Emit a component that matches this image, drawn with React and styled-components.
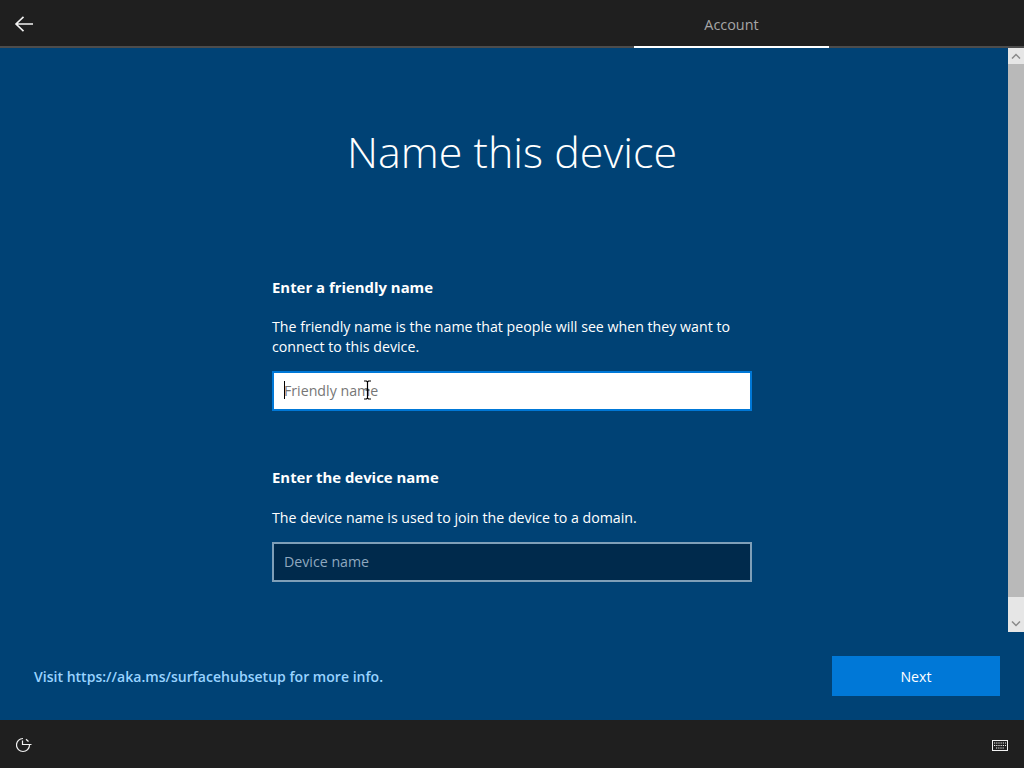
import React from 'react';
import styled, { createGlobalStyle } from 'styled-components';

const GlobalStyle = createGlobalStyle`
	html, body { margin: 0; padding: 0; }
	body { font-family: "Open Sans", "Noto Sans", "Liberation Sans", sans-serif; background: #004275; }
	* { box-sizing: border-box; }
`;

const Page = styled.div`
	width: 1024px;
	height: 768px;
	display: flex;
	flex-direction: column;
	overflow: hidden;
	background: #004275;
	color: #fff;
`;

const TopBar = styled.header`
	height: 48px;
	flex: none;
	display: flex;
	background: #1f1f1f;
	border-bottom: 2px solid #4c4c4c;
`;
const BackButton = styled.button`
	width: 48px;
	height: 46px;
	padding: 2px 0 0;
	border: 0;
	background: none;
	display: flex;
	align-items: center;
	justify-content: center;
	color: #f2f2f2;
`;
const TabSpacer = styled.div`
	width: 586px;
`;
const Tab = styled.div`
	width: 195px;
	height: 48px;
	padding-top: 3px;
	display: flex;
	align-items: center;
	justify-content: center;
	font-size: 14.4px;
	color: #a6a6a6;
	border-bottom: 2px solid #fff;
`;

const Body = styled.div`
	height: 584px;
	flex: none;
	display: flex;
`;
const Content = styled.main`
	flex: 1;
	display: flex;
	flex-direction: column;
	align-items: center;
`;
const Title = styled.h1`
	margin: 72px 0 0;
	height: 64px;
	font-size: 43px;
	line-height: 64px;
	font-weight: 300;
	color: #fff;
	padding-left: 16px;
`;
const Form = styled.div`
	width: 480px;
	margin: 93px 0 0 16px;
	display: flex;
	flex-direction: column;
`;
const Heading = styled.h2`
	margin: 0;
	font-size: 14.9px;
	line-height: 20px;
	font-weight: 700;
`;
const Description = styled.p`
	margin: ${p => p.$top || 20}px 0 14px;
	font-size: 14.2px;
	line-height: 20px;
`;
const Field = styled.div`
	position: relative;
	height: 40px;
	margin-bottom: ${p => p.$gap || 0}px;
	padding: 0 10px 1px;
	display: flex;
	align-items: center;
	font-size: 14.2px;
	border: 2px solid ${p => p.$focused ? '#0078d7' : '#7f9fb8'};
	background: ${p => p.$focused ? '#fff' : '#002a4c'};
	color: ${p => p.$focused ? '#767676' : '#8fa8bf'};
`;
const Caret = styled.span`
	position: absolute;
	left: 10px;
	top: 8px;
	width: 1px;
	height: 18px;
	background: #000;
`;
const Pointer = styled.svg`
	position: absolute;
	left: 89px;
	top: 7px;
`;

const ScrollBar = styled.div`
	width: 16px;
	flex: none;
	display: flex;
	flex-direction: column;
	background: #e6e6e6;
`;
const ScrollArrow = styled.div`
	height: 16px;
	flex: none;
	display: flex;
	align-items: center;
	justify-content: center;
	color: #8a8a8a;
`;
const ScrollThumb = styled.div`
	height: 533px;
	flex: none;
	background: #b9b9b9;
`;
const ScrollTrack = styled.div`
	flex: 1;
`;

const Footer = styled.div`
	height: 88px;
	flex: none;
	padding: 0 24px 0 34px;
	display: flex;
	align-items: center;
	justify-content: space-between;
`;
const InfoLink = styled.a`
	font-size: 14.05px;
	font-weight: 600;
	color: #99d3ff;
`;
const NextButton = styled.button`
	width: 168px;
	height: 40px;
	border: 0;
	padding: 0;
	background: #0078d7;
	color: #fff;
	font: inherit;
	font-size: 14.2px;
`;

const BottomBar = styled.footer`
	height: 48px;
	flex: none;
	padding: 2px 16px 0;
	display: flex;
	align-items: center;
	justify-content: space-between;
	background: #1f1f1f;
	color: #f2f2f2;
`;

const Chevron = ({ up }) => (
	<svg width="10" height="6" viewBox="0 0 10 6" fill="none" stroke="currentColor" strokeWidth="1.5">
		<path d={up ? 'M1 5.5L5 1.5L9 5.5' : 'M1 .5L5 4.5L9 .5'} />
	</svg>
);

function App() {
	return (
		<Page>
			<GlobalStyle />
			<TopBar>
				<BackButton aria-label="Back">
					<svg width="20" height="16" viewBox="0 0 20 16" fill="none" stroke="currentColor" strokeWidth="1.6">
						<path d="M2 8H19M9.5 .8L2 8L9.5 15.2" />
					</svg>
				</BackButton>
				<TabSpacer />
				<Tab>Account</Tab>
			</TopBar>
			<Body>
				<Content>
					<Title>Name this device</Title>
					<Form>
						<Heading>Enter a friendly name</Heading>
						<Description>
							The friendly name is the name that people will see when they want to<br />
							connect to this device.
						</Description>
						<Field $focused $gap={56}>
							Friendly name
							<Caret />
							<Pointer width="9" height="20" viewBox="0 0 9 20" fill="none" stroke="#000" strokeWidth="1.2">
								<path d="M1 1H3.5L4.5 2L5.5 1H8M4.5 2V18M1 19H3.5L4.5 18L5.5 19H8M2.5 10H6.5" />
							</Pointer>
						</Field>
						<Heading>Enter the device name</Heading>
						<Description $top={21}>The device name is used to join the device to a domain.</Description>
						<Field>Device name</Field>
					</Form>
				</Content>
				<ScrollBar>
					<ScrollArrow><Chevron up /></ScrollArrow>
					<ScrollThumb />
					<ScrollTrack />
					<ScrollArrow><Chevron /></ScrollArrow>
				</ScrollBar>
			</Body>
			<Footer>
				<InfoLink>Visit https://aka.ms/surfacehubsetup for more info.</InfoLink>
				<NextButton>Next</NextButton>
			</Footer>
			<BottomBar>
				<svg width="16" height="16" viewBox="0 0 16 16" fill="none" stroke="currentColor" strokeWidth="1.2">
					<path d="M7 1.5A6.5 6.5 0 1 0 13.5 8M6.5 3.5V7.5H15.5M10 2.2L12.5 4.5" />
				</svg>
				<svg width="16" height="11" viewBox="0 0 16 11" fill="none" stroke="currentColor" strokeWidth="1">
					<rect x=".5" y=".5" width="15" height="10" />
					<path d="M2 3H14M2 5.5H14M4 8H12" strokeDasharray="1.2 1" />
				</svg>
			</BottomBar>
		</Page>
	);
}

export default App;
